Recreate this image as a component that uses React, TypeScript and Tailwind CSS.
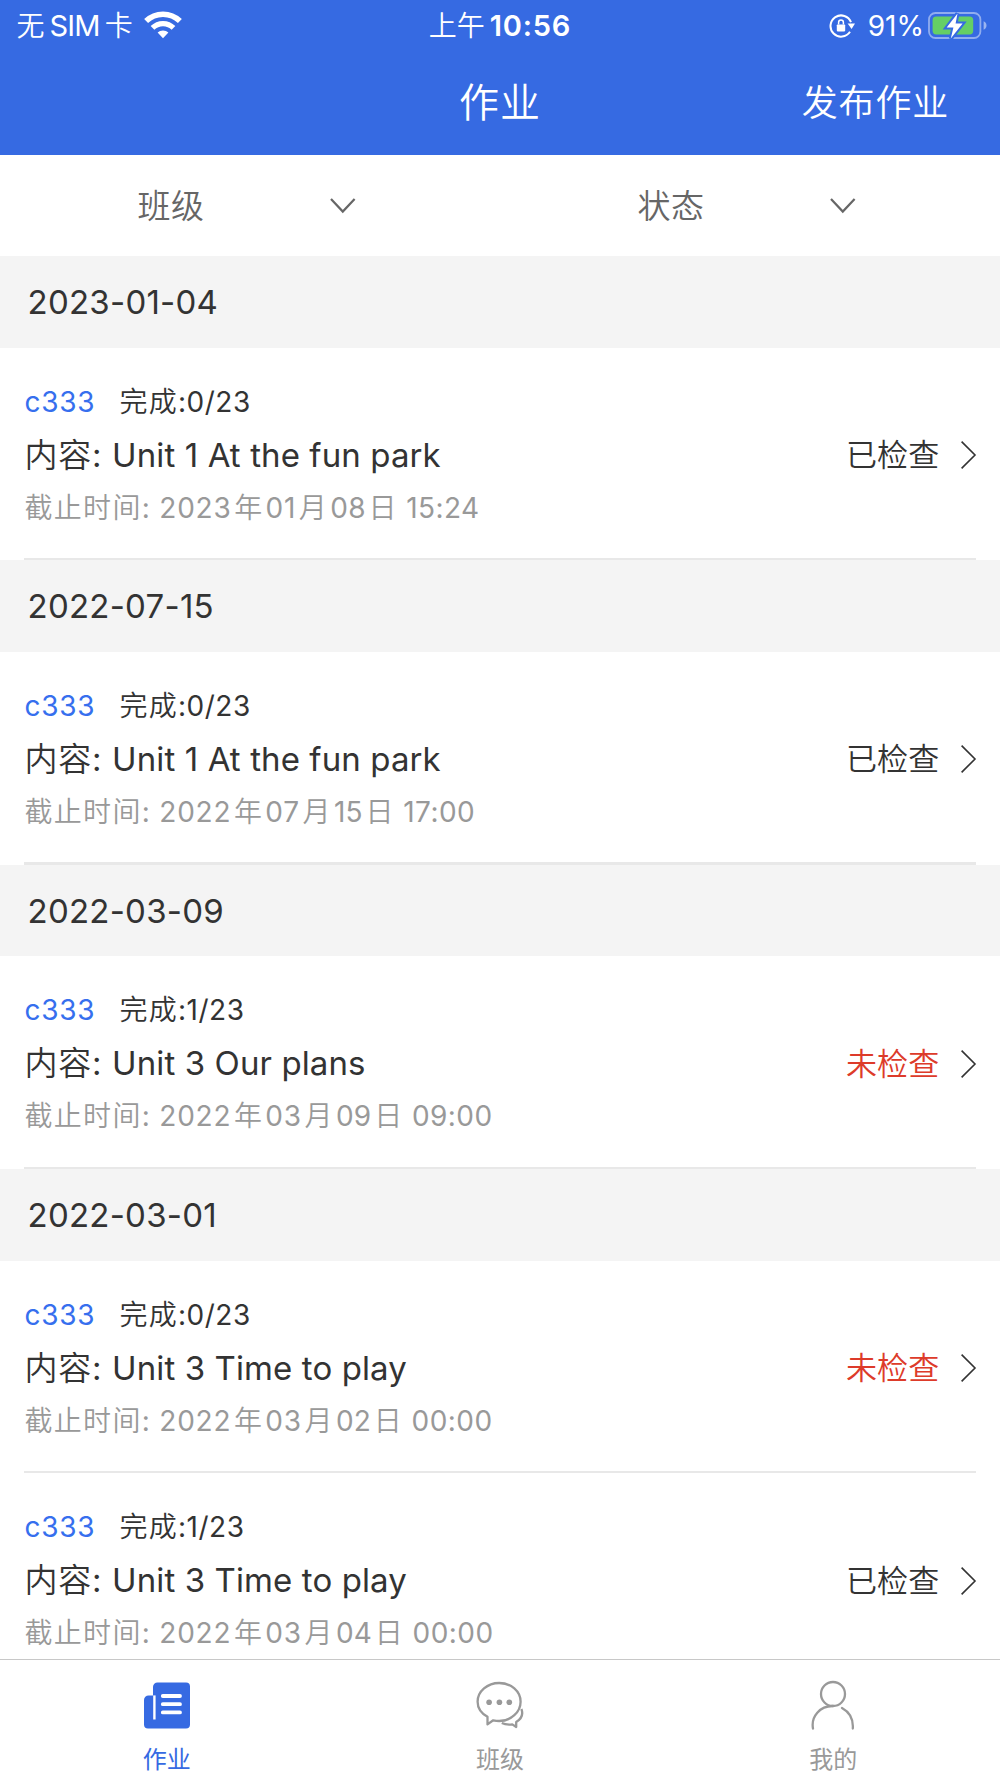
import type { ReactNode } from 'react';

type Homework = {
  progress: string;
  title: string;
  due: { year: string; month: string; day: string; time: string };
  checked: boolean;
};

type Group = { date: string; items: Homework[] };

const groups: Group[] = [
  {
    date: '2023-01-04',
    items: [
      { progress: '0/23', title: 'Unit 1 At the fun park', due: { year: '2023', month: '01', day: '08', time: '15:24' }, checked: true },
    ],
  },
  {
    date: '2022-07-15',
    items: [
      { progress: '0/23', title: 'Unit 1 At the fun park', due: { year: '2022', month: '07', day: '15', time: '17:00' }, checked: true },
    ],
  },
  {
    date: '2022-03-09',
    items: [
      { progress: '1/23', title: 'Unit 3 Our plans', due: { year: '2022', month: '03', day: '09', time: '09:00' }, checked: false },
    ],
  },
  {
    date: '2022-03-01',
    items: [
      { progress: '0/23', title: 'Unit 3 Time to play', due: { year: '2022', month: '03', day: '02', time: '00:00' }, checked: false },
      { progress: '1/23', title: 'Unit 3 Time to play', due: { year: '2022', month: '03', day: '04', time: '00:00' }, checked: true },
    ],
  },
];

function WifiIcon() {
  return (
    <svg width="38" height="28" viewBox="0 0 38 28" fill="none" stroke="#fff">
      <path d="M2.1 10.1 A24.3 24.3 0 0 1 35.9 10.1" strokeWidth="5.6" />
      <path d="M8.5 16.9 A14.8 14.8 0 0 1 29.5 16.9" strokeWidth="5.2" />
      <path d="M19 27.2 L13.6 21.6 A7.8 7.8 0 0 1 24.4 21.6 Z" fill="#fff" stroke="none" />
    </svg>
  );
}

function RotationLockIcon() {
  return (
    <svg width="27" height="24" viewBox="0 0 27 24" fill="none">
      <path d="M22 8.2 A10.6 10.6 0 1 0 21 17.8" stroke="#fff" strokeWidth="2" />
      <path d="M18.6 9.6 H26 L22.6 15 Z" fill="#fff" />
      <rect x="7.8" y="10.4" width="8.4" height="7" rx="0.8" fill="#fff" />
      <path d="M9.6 10.6 V8.4 a2.4 2.4 0 0 1 4.8 0 V10.6" stroke="#fff" strokeWidth="1.5" />
    </svg>
  );
}

function BatteryIcon() {
  return (
    <svg width="60" height="28" viewBox="0 0 60 28" fill="none">
      <rect x="1" y="2" width="51.4" height="25" rx="6.5" stroke="#fff" strokeOpacity="0.45" strokeWidth="1.8" />
      <path d="M55.6 10.2 c3.9 1.6 3.9 7 0 8.6 Z" fill="#fff" fillOpacity="0.5" />
      <rect x="4.6" y="5.6" width="40.6" height="17.8" rx="3.6" fill="#65cf65" />
      <path d="M29.5 2.4 L18.7 16.6 H25.4 L22.8 27.6 L34.6 12.6 H27.6 Z" fill="#fff" stroke="#366ae2" strokeWidth="4" />
      <path d="M29.5 2.4 L18.7 16.6 H25.4 L22.8 27.6 L34.6 12.6 H27.6 Z" fill="#fff" />
    </svg>
  );
}

function StatusBar() {
  return (
    <div className="grid h-[51px] grid-cols-3 items-center text-[28px] leading-[50px]">
      <div className="flex items-center pl-[16.5px]">
        <span className="pt-[1px] font-[350]">无</span>
        <span className="ml-[5px] text-[29px] tracking-[-0.8px]">SIM</span>
        <span className="ml-[5px] pt-[1px] font-[350]">卡</span>
        <span className="-mt-[2px] ml-[11.5px]">
          <WifiIcon />
        </span>
      </div>
      <div className="flex items-center justify-center">
        <span className="pt-[1px] font-[350]">上午</span>
        <span className="ml-[5px] text-[29px] font-semibold tracking-[0.8px]">10:56</span>
      </div>
      <div className="flex items-center justify-end pr-[12px]">
        <RotationLockIcon />
        <span className="ml-[12px] mr-[4px]">91%</span>
        <span className="-mt-[2px]">
          <BatteryIcon />
        </span>
      </div>
    </div>
  );
}

function Header() {
  return (
    <header className="h-[155px] shrink-0 bg-[#366ae2] text-white">
      <StatusBar />
      <div className="grid h-[103px] grid-cols-3 items-center font-[350]">
        <span />
        <h1 className="text-center text-[40px] tracking-[0.9px]">作业</h1>
        <button className="pr-[51px] pt-[1px] text-right text-[36px] font-[350] tracking-[0.8px]">发布作业</button>
      </div>
    </header>
  );
}

function Filter({ label }: { label: string }) {
  return (
    <button className="flex h-full w-1/2 items-center pl-[137.5px] text-[#666]">
      <span className="pt-[2px] text-[33px] font-[350] tracking-[0.5px]">{label}</span>
      <svg className="ml-[125px]" width="26" height="18" viewBox="0 0 26 18" fill="none" stroke="currentColor" strokeWidth="2.2">
        <path d="M1 2 L12.8 14.6 L24.6 2" />
      </svg>
    </button>
  );
}

function Cjk({ children }: { children: ReactNode }) {
  return <span className="mx-[2.6px] font-[350]">{children}</span>;
}

function HomeworkRow({ item, last }: { item: Homework; last: boolean }) {
  const { due } = item;
  return (
    <div className="mx-6 flex h-[212.67px] flex-col pt-[28px]">
      <div className="flex items-center justify-between">
        <div className="whitespace-pre text-[28px] leading-[53px] text-[#333]">
          <div>
            <span className="ml-[0.5px] tracking-[0.75px] text-[#366fee]">c333</span>
            <span className="ml-[24px] font-[350] tracking-[1.3px]">完成</span>
            <span className="tracking-[0.5px]">:{item.progress}</span>
          </div>
          <div className="text-[33px] tracking-[0.1px]">
            <span className="ml-[0.5px] font-[350] tracking-[0.7px]">内容</span>
            <span className="tracking-[0.7px]">: </span>
            {item.title}
          </div>
          <div className="tracking-[0.8px] text-[#999]">
            <span className="ml-[0.5px] font-[350] tracking-[1.3px]">截止时间</span>: {due.year}
            <Cjk>年</Cjk>
            {due.month}
            <Cjk>月</Cjk>
            <span className="tracking-[0.3px]">{due.day}</span>
            <Cjk>日</Cjk>
            <span className="-ml-[2px] tracking-[0.45px]"> {due.time}</span>
          </div>
        </div>
        <div className="flex items-center">
          <span className={item.checked ? 'text-[31px] font-[350] tracking-[0.2px] text-[#333]' : 'text-[31px] font-[350] tracking-[0.2px] text-[#dd3b2a]'}>
            {item.checked ? '已检查' : '未检查'}
          </span>
          <svg className="-mr-[0.5px] ml-[20px]" width="17" height="30" viewBox="0 0 17 30" fill="none" stroke="#333" strokeWidth="1.6">
            <path d="M1.6 1.6 L15 15 L1.6 28.4" />
          </svg>
        </div>
      </div>
      {!last && <div className="mt-auto h-[2.3px] bg-[#e8e8e8]" />}
    </div>
  );
}

function HomeworkTabIcon() {
  return (
    <svg width="46" height="47" viewBox="0 0 46 47">
      <path d="M13.5 0.5 H42 a4 4 0 0 1 4 4 V42.5 a4 4 0 0 1 -4 4 H4 a4 4 0 0 1 -4 -4 V18 a4.6 4.6 0 0 1 4.6 -4.6 H9 V5 a4.5 4.5 0 0 1 4.5 -4.5 Z" fill="#366ae2" />
      <path d="M10.4 13.4 V37.5" stroke="#fff" strokeWidth="2.4" />
      <path d="M18.8 14 H36 M18.8 22.2 H36 M18.8 30.4 H36" stroke="#fff" strokeWidth="3.8" strokeLinecap="round" />
    </svg>
  );
}

function ClassTabIcon() {
  return (
    <svg width="50" height="49" viewBox="0 0 50 49" fill="none" stroke="#999" strokeWidth="2.3" strokeLinejoin="round">
      <path d="M12.5 44.4 V36.8 C6.5 33.4 2.6 27.9 2.6 21.7 C2.6 11.3 12.5 3 24.2 3 C36 3 45.6 11.3 45.6 21.7 C45.6 32 36 41 24.2 41 C21.9 41 20 40.7 18.2 40.3 Z" />
      <path d="M46.4 29 C48.4 34.4 46.2 39 41.2 41.9 V47 L37.3 44.4 C33 44.9 29.5 44.4 26.8 43" />
      <g fill="#999" stroke="none">
        <circle cx="14.1" cy="22.3" r="2.8" />
        <circle cx="24.4" cy="22.3" r="2.8" />
        <circle cx="34.3" cy="22.3" r="2.8" />
      </g>
    </svg>
  );
}

function ProfileTabIcon() {
  return (
    <svg width="44" height="50" viewBox="0 0 44 50" fill="none" stroke="#999" strokeWidth="2.3" strokeLinecap="round">
      <circle cx="22" cy="14" r="12" />
      <path d="M2 48.5 C-0.2 36.5 9 25.8 22 26 M31 28 C39.4 32.6 42.4 40.2 41.8 48.5" />
    </svg>
  );
}

function Tab({ icon, label, active = false }: { icon: ReactNode; label: string; active?: boolean }) {
  return (
    <button className={active ? 'flex flex-1 flex-col items-center pt-[20px] text-[#366ae2]' : 'flex flex-1 flex-col items-center pt-[19px] text-[#999]'}>
      <span className="flex h-[52px] items-center">{icon}</span>
      <span className={active ? 'mt-[10px] text-[24px] leading-[36px]' : 'mt-[11px] text-[24px] leading-[36px]'}>{label}</span>
    </button>
  );
}

export default function App() {
  return (
    <div className="flex h-[1778px] w-[1000px] flex-col overflow-hidden bg-white font-[Inter,'Noto_Sans_CJK_SC',sans-serif]">
      <Header />
      <div className="flex h-[101px] shrink-0">
        <Filter label="班级" />
        <Filter label="状态" />
      </div>
      <main className="min-h-0 flex-1 overflow-hidden">
        {groups.map((group, g) => (
          <section key={group.date}>
            <h2 className="h-[91.67px] bg-[#f4f4f4] pl-[27.5px] text-[33px] leading-[93px] tracking-[0.25px] text-[#333]">{group.date}</h2>
            {group.items.map((item, i) => (
              <HomeworkRow key={i} item={item} last={g === groups.length - 1 && i === group.items.length - 1} />
            ))}
          </section>
        ))}
      </main>
      <nav className="flex h-[119.5px] shrink-0 border-t border-[#c8c8c8] bg-white">
        <Tab icon={<HomeworkTabIcon />} label="作业" active />
        <Tab icon={<ClassTabIcon />} label="班级" />
        <Tab icon={<ProfileTabIcon />} label="我的" />
      </nav>
    </div>
  );
}
